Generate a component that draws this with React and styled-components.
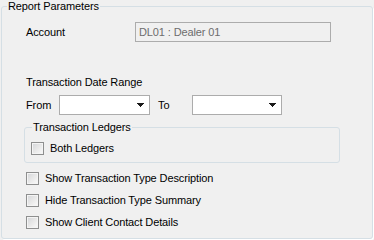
import React from 'react';
import styled, { createGlobalStyle } from 'styled-components';

const GlobalStyle = createGlobalStyle`
  html, body {
    margin: 0;
    padding: 0;
    background: #f0f0f0;
  }
  body {
    font-family: 'Liberation Sans', Arial, sans-serif;
    font-size: 11px;
    letter-spacing: -0.12px;
    color: #000;
  }
`;

const Page = styled.div`
  width: 374px;
  height: 240px;
  padding: 0 1px;
  box-sizing: border-box;
`;

const Group = styled.fieldset`
  margin: ${({ $inner }) => ($inner ? '6px 0 0 0' : '0')};
  padding: 0;
  width: ${({ $inner }) => ($inner ? '316px' : '372px')};
  box-sizing: border-box;
  border: 1px solid #d5dfe5;
  border-radius: 3px;
  box-shadow: ${({ $inner }) => ($inner ? 'none' : '1px 1px 0 #fff')};
  min-width: 0;
`;

const Legend = styled.legend`
  margin-left: ${({ $inner }) => ($inner ? '7px' : '5px')};
  padding: 0 1px;
  line-height: 13px;
  font-size: 11px;
`;

const Body = styled.div`
  padding: 9px 0 9px 22px;
  display: flex;
  flex-direction: column;
`;

const InnerBody = styled.div`
  padding: 8px 0 7px 4px;
`;

const Row = styled.div`
  display: flex;
  align-items: center;
  height: 20px;
  margin-top: ${({ $top }) => $top || 0}px;
  padding-left: 2px;
`;

const Label = styled.span`
  width: ${({ $w }) => $w}px;
  margin-left: ${({ $ml }) => $ml || 0}px;
  line-height: 13px;
  white-space: nowrap;
`;

const Caption = styled.div`
  margin-top: ${({ $top }) => $top}px;
  padding-left: 2px;
  line-height: 13px;
`;

const TextBox = styled.div`
  width: 196px;
  height: 20px;
  box-sizing: border-box;
  border: 1px solid #acacac;
  background: #f0f0f0;
  color: #6d6d6d;
  padding-left: 3px;
  display: flex;
  align-items: center;
`;

const Combo = styled.div`
  width: ${({ $w }) => $w}px;
  height: 20px;
  box-sizing: border-box;
  border: 1px solid #acacac;
  background: #fff;
  display: flex;
  align-items: center;
  justify-content: flex-end;
  padding-right: 5px;
`;

const Check = styled.label`
  display: flex;
  align-items: center;
  height: 13px;
  margin-top: ${({ $top }) => $top || 0}px;
  padding-left: 2px;
  line-height: 13px;
  white-space: nowrap;
`;

const Box = styled.span`
  width: 13px;
  height: 13px;
  box-sizing: border-box;
  border: 1px solid #8e8f8f;
  background: linear-gradient(135deg, #d3d5d8 0%, #e8e8e8 50%, #fbfbfb 100%);
  box-shadow: inset 0 0 0 1px #f4f4f4;
  margin-right: 6px;
  flex: none;
`;

const Arrow = () => (
  <svg width="7" height="4" viewBox="0 0 7 4">
    <path d="M0 0h7v1H6v1H5v1H4v1H3V3H2V2H1V1H0z" fill="#1a1a1a" />
  </svg>
);

const CheckItem = ({ top, children }) => (
  <Check $top={top}>
    <Box />
    {children}
  </Check>
);

export default function App() {
  return (
    <Page>
      <GlobalStyle />
      <Group>
        <Legend>Report Parameters</Legend>
        <Body>
          <Row>
            <Label $w={109}>Account</Label>
            <TextBox>DL01 : Dealer 01</TextBox>
          </Row>
          <Caption $top={34}>Transaction Date Range</Caption>
          <Row $top={6}>
            <Label $w={33}>From</Label>
            <Combo $w={91}>
              <Arrow />
            </Combo>
            <Label $w={34} $ml={8}>To</Label>
            <Combo $w={90}>
              <Arrow />
            </Combo>
          </Row>
          <Group $inner>
            <Legend $inner>Transaction Ledgers</Legend>
            <InnerBody>
              <CheckItem>Both Ledgers</CheckItem>
            </InnerBody>
          </Group>
          <CheckItem top={9}>Show Transaction Type Description</CheckItem>
          <CheckItem top={9}>Hide Transaction Type Summary</CheckItem>
          <CheckItem top={9}>Show Client Contact Details</CheckItem>
        </Body>
      </Group>
    </Page>
  );
}
